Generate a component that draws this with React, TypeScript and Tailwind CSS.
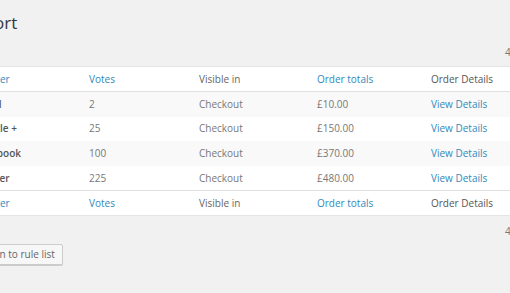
import React from "react";

type Row = { answer: string; votes: string; visible: string; total: string };

const rows: Row[] = [
  { answer: "Email", votes: "2", visible: "Checkout", total: "£10.00" },
  { answer: "Google +", votes: "25", visible: "Checkout", total: "£150.00" },
  { answer: "Facebook", votes: "100", visible: "Checkout", total: "£370.00" },
  { answer: "Twitter", votes: "225", visible: "Checkout", total: "£480.00" },
];

function HeadRow({ top }: { top?: boolean }) {
  return (
    <div
      className={
        "flex h-[25px] items-center bg-white " +
        (top ? "border-b border-[#e1e1e1]" : "border-t border-[#e1e1e1]")
      }
    >
      <div className="w-[114px] pl-[8px] text-[#3289bb]">Answer</div>
      <div className="w-[110px] pl-[8px] text-[#3289bb]">Votes</div>
      <div className="w-[118px] pl-[8px] text-[#666]">Visible in</div>
      <div className="w-[114px] pl-[8px] text-[#3289bb]">Order totals</div>
      <div className="flex-1 pl-[8px] text-[#555]">Order Details</div>
    </div>
  );
}

export default function App() {
  return (
    <div
      className="h-[293px] w-[510px] overflow-hidden bg-[#f1f1f1] text-[10px]"
      style={{ fontFamily: '"Open Sans", sans-serif' }}
    >
      <div className="-ml-[34px] flex w-[700px] flex-col">
        <h1 className="-ml-[60px] pt-[12px] text-[17px] leading-[22px] text-[#32373c]">
          Survey Report
        </h1>

        <div className="h-[32px] pl-[539px] pt-[12px] leading-[12px] text-[#777]">
          4 items
        </div>

        <div className="border border-[#e5e5e5] bg-white">
          <HeadRow top />
          {rows.map((r, i) => (
            <div
              key={r.answer}
              className={
                "flex h-[24.6px] items-center " +
                (i % 2 === 0 ? "bg-[#f9f9f9]" : "bg-white")
              }
            >
              <div className="w-[114px] pl-[8px] font-semibold text-[#555]">{r.answer}</div>
              <div className="w-[110px] pl-[8px] text-[#777]">{r.votes}</div>
              <div className="w-[118px] pl-[8px] text-[#777]">{r.visible}</div>
              <div className="w-[114px] pl-[8px] text-[#777]">{r.total}</div>
              <div className="flex-1 pl-[8px] text-[#3289bb]">View Details</div>
            </div>
          ))}
          <HeadRow />
        </div>

        <div className="h-[28px] pl-[539px] pt-[9px] leading-[12px] text-[#777]">
          4 items
        </div>

        <div className="flex">
          <button className="h-[21px] rounded-[2px] border border-[#cccccc] bg-[#f7f7f7] px-[7px] leading-[19px] text-[#666] shadow-[0_1px_0_#ccc]">
            Return to rule list
          </button>
        </div>
      </div>
    </div>
  );
}
